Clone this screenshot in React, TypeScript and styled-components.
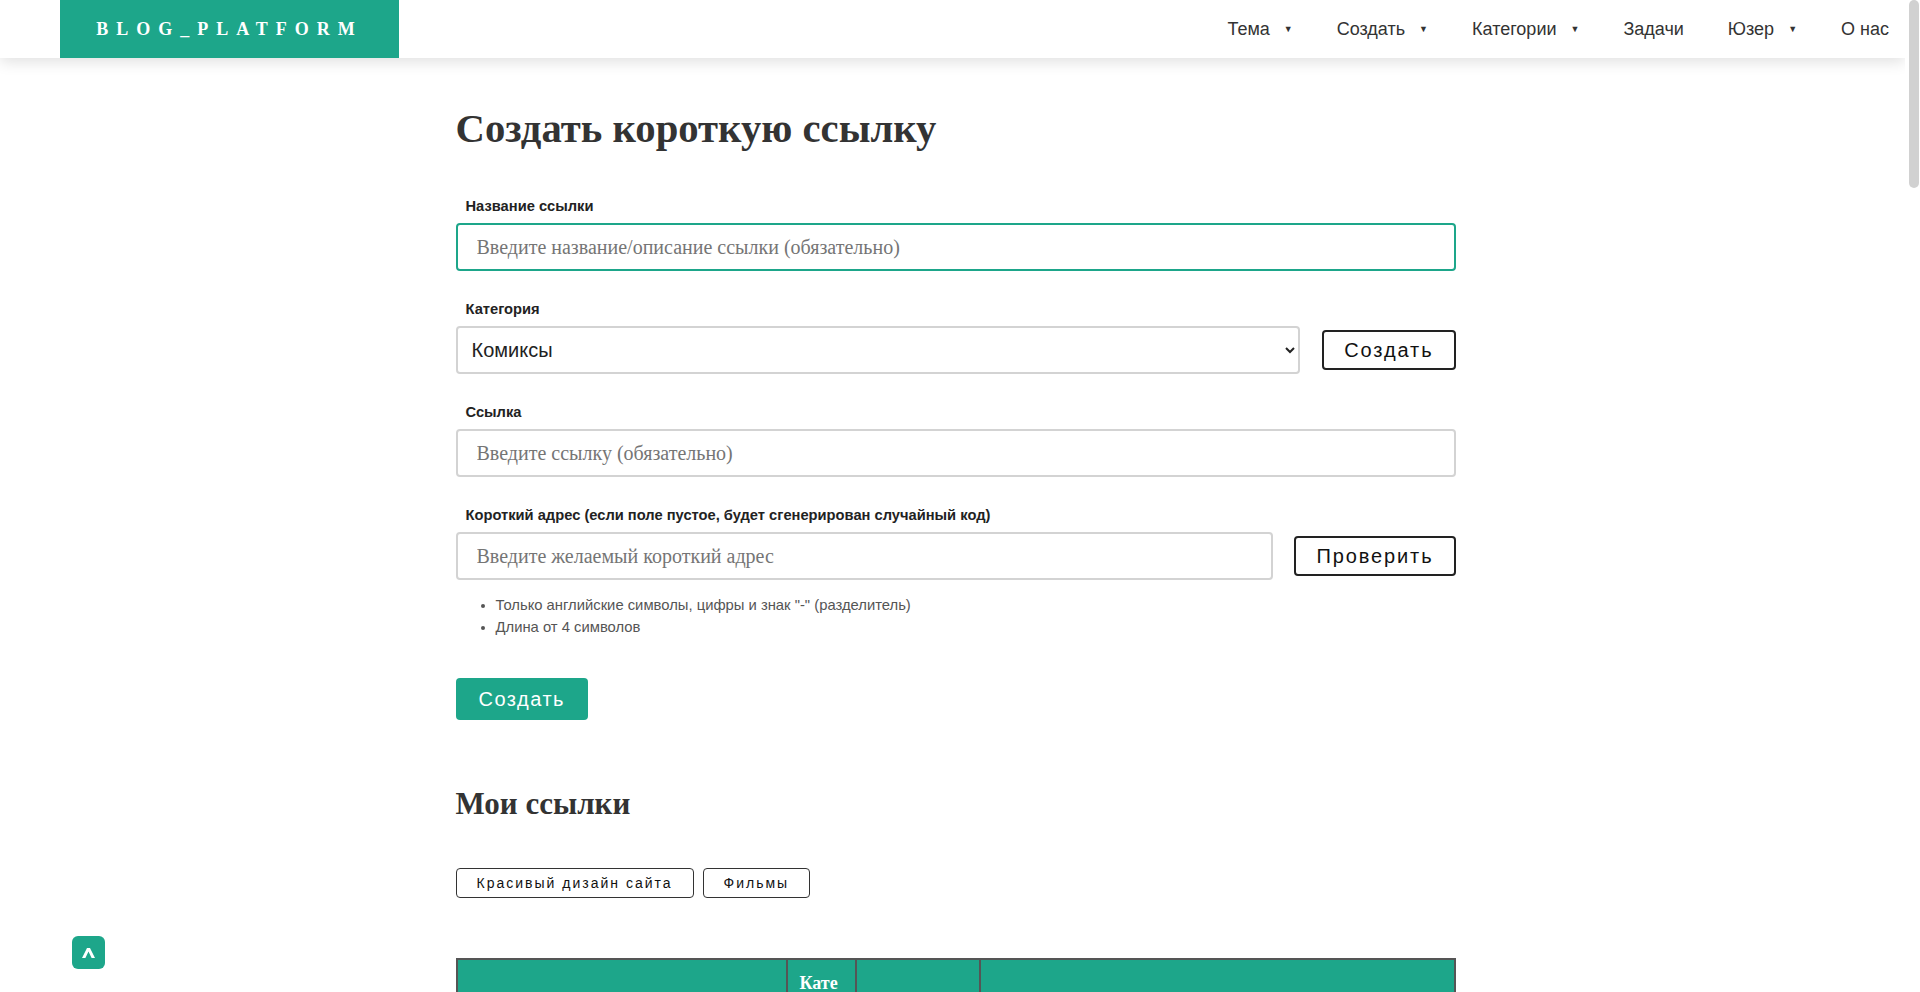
import React from "react";
import styled, { createGlobalStyle } from "styled-components";

const TEAL = "#1da68a";

const GlobalStyle = createGlobalStyle`
  * { box-sizing: border-box; }
  html, body { margin: 0; padding: 0; background: #fff; height: 100%; overflow: hidden; }
  body { font-family: "Liberation Sans", Arial, sans-serif; color: #333; }
`;

const Viewport = styled.div`
  width: calc(100% - 15px);
  height: 100vh;
  overflow-y: scroll;
  overflow-x: hidden;
  scrollbar-width: none;
  &::-webkit-scrollbar {
    display: none;
  }
`;

const ScrollTrack = styled.div`
  position: fixed;
  top: 0;
  right: 0;
  width: 15px;
  height: 100vh;
  padding: 0 1px 0 4px;
  background: #fff;
  z-index: 5;
`;

const ScrollThumb = styled.div`
  height: 188px;
  border-radius: 5px;
  background: #d1d1d1;
`;

const Header = styled.header`
  position: relative;
  z-index: 2;
  height: 58px;
  background: #fff;
  box-shadow: 0 4px 14px rgba(0, 0, 0, 0.12);
  display: flex;
  align-items: stretch;
  justify-content: space-between;
  padding: 0 16px 0 60px;
`;

const Logo = styled.a`
  width: 339px;
  background: ${TEAL};
  color: #fff;
  display: flex;
  align-items: center;
  justify-content: center;
  font-family: "Liberation Serif", "Times New Roman", serif;
  font-weight: 700;
  font-size: 18px;
  letter-spacing: 8px;
  text-decoration: none;
`;

const Nav = styled.nav`
  display: flex;
  align-items: center;
  gap: 44px;
`;

const NavItem = styled.a`
  display: flex;
  align-items: center;
  gap: 14px;
  font-size: 18px;
  color: #333;
  text-decoration: none;
  cursor: pointer;
`;

const Caret = styled.span`
  font-size: 9px;
  color: #333;
`;

const Main = styled.main`
  width: 1000px;
  margin-left: calc(50% - 497px);
  padding-top: 47px;
  min-height: 5170px;
`;

const Title = styled.h1`
  margin: 0;
  font-family: "Liberation Serif", "Times New Roman", serif;
  font-weight: 700;
  font-size: 40.7px;
  line-height: 48px;
  color: #333;
`;

const Form = styled.form`
  margin-top: 45px;
`;

const Field = styled.div`
  margin-bottom: 30px;
`;

const Label = styled.label`
  display: block;
  margin: 0 0 9px 10px;
  font-size: 14.7px;
  line-height: 16px;
  font-weight: 700;
  color: #222;
`;

const Row = styled.div<{ $gap: number }>`
  display: flex;
  align-items: center;
  gap: ${(p) => p.$gap}px;
`;

const TextInput = styled.input<{ $focused?: boolean }>`
  flex: 1;
  width: 100%;
  height: 48px;
  border: 2px solid ${(p) => (p.$focused ? TEAL : "#d3d3d3")};
  border-radius: 4px;
  padding: 0 19px;
  font-family: "Liberation Serif", "Times New Roman", serif;
  font-size: 20px;
  color: #333;
  outline: none;
  background: #fff;
  &::placeholder {
    color: #757575;
  }
`;

const Select = styled.select`
  flex: 1;
  height: 48px;
  border: 2px solid #d3d3d3;
  border-radius: 4px;
  padding: 0 10px;
  font-family: "Liberation Sans", Arial, sans-serif;
  font-size: 20px;
  color: #222;
  background: #fff;
  outline: none;
`;

const OutlineButton = styled.button`
  flex-shrink: 0;
  height: 40px;
  padding: 0 20px;
  border: 2px solid #222;
  border-radius: 4px;
  background: #fff;
  font-family: "Liberation Sans", Arial, sans-serif;
  font-size: 20px;
  letter-spacing: 1.9px;
  color: #111;
  cursor: pointer;
`;

const Hints = styled.ul`
  margin: 14px 0 0;
  padding-left: 40px;
  font-size: 14.8px;
  line-height: 22px;
  color: #555;
`;

const PrimaryButton = styled.button`
  display: block;
  margin-top: 40px;
  height: 42px;
  padding: 0 23px;
  border: none;
  border-radius: 4px;
  background: ${TEAL};
  color: #fff;
  font-family: "Liberation Sans", Arial, sans-serif;
  font-size: 20px;
  letter-spacing: 1.5px;
  cursor: pointer;
`;

const SubTitle = styled.h2`
  margin: 66px 0 0;
  font-family: "Liberation Serif", "Times New Roman", serif;
  font-weight: 700;
  font-size: 31px;
  line-height: 36px;
  color: #333;
`;

const TagRow = styled.div`
  display: flex;
  gap: 9px;
  margin-top: 46px;
`;

const Tag = styled.button`
  height: 30px;
  padding: 0 20px;
  border: 1px solid #333;
  border-radius: 4px;
  background: #fff;
  font-family: "Liberation Sans", Arial, sans-serif;
  font-size: 14px;
  letter-spacing: 2px;
  color: #111;
  cursor: pointer;
`;

const Table = styled.table`
  margin-top: 60px;
  width: 100%;
  border-collapse: collapse;
  border: 2px solid #555;
  table-layout: fixed;
`;

const Th = styled.th`
  background: ${TEAL};
  color: #fff;
  font-family: "Liberation Serif", "Times New Roman", serif;
  font-weight: 700;
  font-size: 18px;
  line-height: 22px;
  padding: 12px;
  border: 2px solid #555;
  text-align: left;
  vertical-align: middle;
  word-break: break-all;
`;

const Td = styled.td`
  font-size: 15px;
  padding: 12px;
  border: 2px solid #555;
  color: #333;
  word-break: break-all;
`;

const ToTop = styled.button`
  position: fixed;
  left: 72px;
  bottom: 23px;
  width: 33px;
  height: 33px;
  border: none;
  border-radius: 6px;
  background: ${TEAL};
  display: flex;
  align-items: center;
  justify-content: center;
  padding: 0;
  cursor: pointer;
`;

const navItems: { label: string; dropdown: boolean }[] = [
  { label: "Тема", dropdown: true },
  { label: "Создать", dropdown: true },
  { label: "Категории", dropdown: true },
  { label: "Задачи", dropdown: false },
  { label: "Юзер", dropdown: true },
  { label: "О нас", dropdown: false },
];

export default function App() {
  return (
    <>
      <GlobalStyle />
      <Viewport>
        <Header>
          <Logo href="#">BLOG_PLATFORM</Logo>
          <Nav>
            {navItems.map((n) => (
              <NavItem key={n.label}>
                {n.label}
                {n.dropdown && <Caret>▼</Caret>}
              </NavItem>
            ))}
          </Nav>
        </Header>
        <Main>
          <Title>Создать короткую ссылку</Title>
          <Form onSubmit={(e) => e.preventDefault()}>
            <Field>
              <Label>Название ссылки</Label>
              <TextInput
                $focused
                autoFocus
                placeholder="Введите название/описание ссылки (обязательно)"
              />
            </Field>
            <Field>
              <Label>Категория</Label>
              <Row $gap={22}>
                <Select defaultValue="comics">
                  <option value="comics">Комиксы</option>
                  <option value="design">Красивый дизайн сайта</option>
                  <option value="films">Фильмы</option>
                </Select>
                <OutlineButton type="button">Создать</OutlineButton>
              </Row>
            </Field>
            <Field>
              <Label>Ссылка</Label>
              <TextInput placeholder="Введите ссылку (обязательно)" />
            </Field>
            <div>
              <Label>Короткий адрес (если поле пустое, будет сгенерирован случайный код)</Label>
              <Row $gap={21}>
                <TextInput placeholder="Введите желаемый короткий адрес" />
                <OutlineButton type="button">Проверить</OutlineButton>
              </Row>
              <Hints>
                <li>Только английские символы, цифры и знак "-" (разделитель)</li>
                <li>Длина от 4 символов</li>
              </Hints>
            </div>
            <PrimaryButton type="submit">Создать</PrimaryButton>
          </Form>
          <SubTitle>Мои ссылки</SubTitle>
          <TagRow>
            <Tag>Красивый дизайн сайта</Tag>
            <Tag>Фильмы</Tag>
          </TagRow>
          <Table>
            <colgroup>
              <col style={{ width: 330 }} />
              <col style={{ width: 69 }} />
              <col style={{ width: 124 }} />
              <col />
            </colgroup>
            <thead>
              <tr>
                <Th>Название</Th>
                <Th>Категория</Th>
                <Th>Адрес</Th>
                <Th>Ссылка</Th>
              </tr>
            </thead>
            <tbody>
              <tr>
                <Td>Красивый дизайн сайта</Td>
                <Td>Дизайн</Td>
                <Td>design</Td>
                <Td>https://example.com/design</Td>
              </tr>
              <tr>
                <Td>Фильмы</Td>
                <Td>Фильмы</Td>
                <Td>films</Td>
                <Td>https://example.com/films</Td>
              </tr>
            </tbody>
          </Table>
        </Main>
      </Viewport>
      <ScrollTrack aria-hidden>
        <ScrollThumb />
      </ScrollTrack>
      <ToTop aria-label="Наверх">
        <svg width="13" height="10" viewBox="0 0 13 10">
          <polygon points="0,10 5,0 8,0 13,10 9.6,10 6.5,3.6 3.4,10" fill="#fff" />
        </svg>
      </ToTop>
    </>
  );
}
